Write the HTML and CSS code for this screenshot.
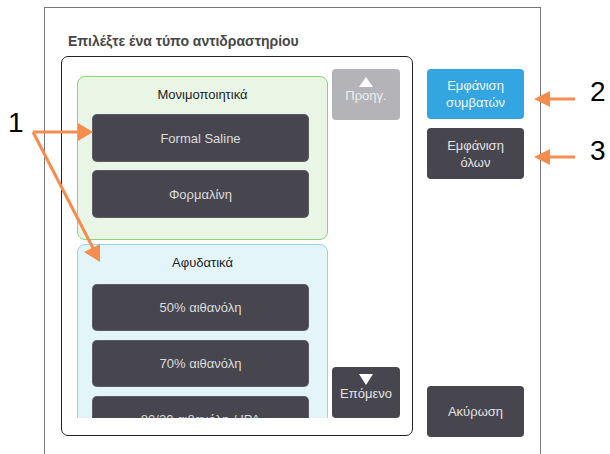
FILE: index.html
```html
<!DOCTYPE html>
<html lang="el">
<head>
  <meta charset="UTF-8" />
  <title>Επιλέξτε ένα τύπο αντιδραστηρίου</title>
  <link rel="stylesheet" href="styles.css">
</head>
<body>

  <div class="dialogo">
    <h1 class="titulo">Επιλέξτε ένα τύπο αντιδραστηρίου</h1>

    <div class="cuerpo">
      <div class="panel">
        <div class="lista">
          <div class="grupo verde">
            <div class="grupo-titulo">Μονιμοποιητικά</div>
            <button class="reactivo">Formal Saline</button>
            <button class="reactivo">Φορμαλίνη</button>
          </div>
          <div class="grupo azul">
            <div class="grupo-titulo">Αφυδατικά</div>
            <button class="reactivo">50% αιθανόλη</button>
            <button class="reactivo">70% αιθανόλη</button>
            <button class="reactivo">80/20 αιθανόλη / IPA</button>
          </div>
        </div>

        <div class="nav">
          <button class="nav-btn inactivo"><span class="tri arriba"></span>Προηγ.</button>
          <button class="nav-btn"><span class="tri abajo"></span>Επόμενο</button>
        </div>
      </div>

      <div class="acciones">
        <button class="accion activo">Εμφάνιση<br>συμβατών</button>
        <button class="accion">Εμφάνιση<br>όλων</button>
        <button class="accion cancelar">Ακύρωση</button>
      </div>
    </div>
  </div>

  <!-- anotaciones -->
  <svg class="flechas" width="610" height="454" viewBox="0 0 610 454">
    <g stroke="#f68d4e" stroke-width="3" fill="none">
      <line x1="33" y1="132" x2="82" y2="132" />
      <line x1="33" y1="132" x2="94" y2="250" />
      <line x1="575" y1="99" x2="546" y2="99" />
      <line x1="575" y1="157" x2="546" y2="157" />
    </g>
    <g fill="#f68d4e">
      <polygon points="93,132 78,123 78,141" />
      <polygon points="100,262 84,252 100,244" />
      <polygon points="534,99 550,91 550,107" />
      <polygon points="534,157 550,149 550,165" />
    </g>
  </svg>
  <span class="num n1">1</span>
  <span class="num n2">2</span>
  <span class="num n3">3</span>

</body>
</html>
```

FILE: styles.css
```css
body {
  margin: 0;
  width: 610px;
  height: 454px;
  overflow: hidden;
  position: relative;
  background: #fff;
  font-family: "Liberation Sans", Arial, sans-serif;
  color: #222;
}

button {
  font-family: inherit;
  border: none;
  cursor: pointer;
}

.dialogo {
  margin: 7px 0 0 44px;
  width: 497px;
  height: 460px;
  border: 1px solid #777;
  border-bottom: none;
  padding: 0 0 0 16px;
  box-sizing: border-box;
}

.titulo {
  margin: 24px 0 0 7px;
  font-size: 14px;
  line-height: 18px;
  font-weight: bold;
  color: #474747;
}

.cuerpo {
  display: flex;
  margin-top: 6px;
}

.panel {
  width: 352px;
  height: 380px;
  box-sizing: border-box;
  border: 1px solid #222;
  border-radius: 7px;
  padding: 19px 0 0 15px;
  display: flex;
  gap: 4px;
}

.lista {
  width: 251px;
  height: 342px;
  overflow: hidden;
  display: flex;
  flex-direction: column;
  gap: 4px;
  flex-shrink: 0;
}

.grupo {
  border: 1px solid;
  border-radius: 8px;
  padding: 10px 0 0 15px;
  display: flex;
  flex-direction: column;
  gap: 10px;
  flex-shrink: 0;
}

.grupo.verde {
  background: #eaf6e5;
  border-color: #8cd379;
  height: 164px;
  box-sizing: border-box;
}

.grupo.azul {
  background: #e4f5fa;
  border-color: #8fd6ea;
  gap: 11px;
  height: 220px;
  box-sizing: border-box;
}

.grupo-titulo {
  width: 219px;
  text-align: center;
  font-size: 13px;
  line-height: 16px;
  color: #222;
  margin-bottom: 2px;
}

.azul .grupo-titulo {
  margin-bottom: 3px;
}

.reactivo {
  width: 215px;
  height: 46px;
  flex-shrink: 0;
  background: #47464f;
  color: #dcdcdc;
  font-size: 13px;
  border-radius: 4px;
  box-shadow: 0 0 0 1px #5c5b63;
}

.azul .reactivo {
  height: 45px;
}

.nav {
  display: flex;
  flex-direction: column;
  justify-content: space-between;
  margin-top: -7px;
  height: 349px;
}

.nav-btn {
  width: 68px;
  height: 51px;
  border-radius: 4px;
  background: #47464f;
  color: #e2e2e2;
  font-size: 13px;
  display: flex;
  flex-direction: column;
  align-items: center;
  justify-content: center;
  padding: 0 0 10px;
  gap: 1px;
}

.nav-btn.inactivo {
  background: #b4b4b8;
  color: #eeeeee;
}

.tri {
  width: 0;
  height: 0;
  border-left: 7px solid transparent;
  border-right: 7px solid transparent;
}

.tri.arriba {
  border-bottom: 10px solid #fff;
}

.tri.abajo {
  border-top: 11px solid #fff;
}

.acciones {
  margin: 13px 0 0 14px;
  display: flex;
  flex-direction: column;
  gap: 9px;
}

.accion {
  width: 97px;
  height: 51px;
  border-radius: 4px;
  background: #47464f;
  color: #e2e2e2;
  font-size: 13px;
  line-height: 17px;
}

.accion.activo {
  background: #33a5e1;
  color: #f2f8fc;
  height: 50px;
}

.accion.cancelar {
  margin-top: 198px;
}

.flechas {
  position: absolute;
  left: 0;
  top: 0;
  pointer-events: none;
}

.num {
  position: absolute;
  font-size: 28px;
  line-height: 28px;
  color: #000;
}

.n1 { left: 8px; top: 109px; }
.n2 { left: 590px; top: 78px; }
.n3 { left: 590px; top: 137px; }
```
